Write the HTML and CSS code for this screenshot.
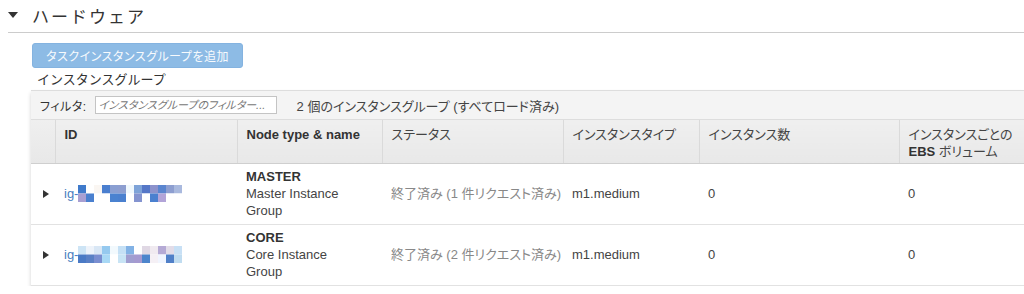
FILE: index.html
```html
<!DOCTYPE html>
<html lang="ja">

<head>
    <meta charset="UTF-8">
    <title>ハードウェア</title>
    <link rel="stylesheet" href="styles.css">
</head>

<body>

    <section class="section">
        <h2 class="section-title"><span class="caret-down"></span>ハードウェア</h2>

        <div class="section-body">
            <button class="btn-add" type="button">タスクインスタンスグループを追加</button>
            <div class="group-label">インスタンスグループ</div>

            <div class="grid-box">
                <div class="filter-bar">
                    <label for="filter">フィルタ:</label>
                    <input id="filter" type="text" placeholder="インスタンスグループのフィルター...">
                    <span class="filter-count">2 個のインスタンスグループ (すべてロード済み)</span>
                </div>

                <table class="grid">
                    <colgroup>
                        <col class="c-exp">
                        <col class="c-id">
                        <col class="c-node">
                        <col class="c-status">
                        <col class="c-type">
                        <col class="c-count">
                        <col>
                    </colgroup>
                    <thead>
                        <tr>
                            <th></th>
                            <th class="strong">ID</th>
                            <th class="strong">Node type &amp; name</th>
                            <th>ステータス</th>
                            <th>インスタンスタイプ</th>
                            <th>インスタンス数</th>
                            <th>インスタンスごとの<br><b>EBS</b> ボリューム</th>
                        </tr>
                    </thead>
                    <tbody>
                        <tr>
                            <td class="exp"><span class="caret-right"></span></td>
                            <td class="mid"><a class="ig" href="#">ig-<svg class="mosaic" width="112" height="17" viewBox="0 0 14 2" preserveAspectRatio="none">
                                <rect x="0" y="0" width="1" height="1" fill="#3f7acb"/>
                                <rect x="1" y="0" width="1" height="1" fill="#ffffff"/>
                                <rect x="2" y="0" width="1" height="1" fill="#faf6f2"/>
                                <rect x="3" y="0" width="1" height="1" fill="#4a7fcf"/>
                                <rect x="4" y="0" width="1" height="1" fill="#8a9fd2"/>
                                <rect x="5" y="0" width="1" height="1" fill="#8d9ed0"/>
                                <rect x="6" y="0" width="1" height="1" fill="#f0f8fd"/>
                                <rect x="7" y="0" width="1" height="1" fill="#7ea3d8"/>
                                <rect x="8" y="0" width="1" height="1" fill="#5577c7"/>
                                <rect x="9" y="0" width="1" height="1" fill="#8c92cc"/>
                                <rect x="10" y="0" width="1" height="1" fill="#5a85cf"/>
                                <rect x="11" y="0" width="1" height="1" fill="#8d9ed0"/>
                                <rect x="12" y="0" width="1" height="1" fill="#a9b9de"/>
                                <rect x="0" y="1" width="1" height="1" fill="#a89fd2"/>
                                <rect x="1" y="1" width="1" height="1" fill="#4a80cf"/>
                                <rect x="2" y="1" width="1" height="1" fill="#ffffff"/>
                                <rect x="3" y="1" width="1" height="1" fill="#ffffff"/>
                                <rect x="4" y="1" width="1" height="1" fill="#4a82d0"/>
                                <rect x="5" y="1" width="1" height="1" fill="#4a80cf"/>
                                <rect x="6" y="1" width="1" height="1" fill="#ffffff"/>
                                <rect x="7" y="1" width="1" height="1" fill="#8494d0"/>
                                <rect x="8" y="1" width="1" height="1" fill="#ffffff"/>
                                <rect x="9" y="1" width="1" height="1" fill="#4a80cf"/>
                                <rect x="10" y="1" width="1" height="1" fill="#b2a4d8"/>
                                <rect x="11" y="1" width="1" height="1" fill="#ffffff"/>
                                <rect x="12" y="1" width="1" height="1" fill="#ffffff"/>
                            </svg></a></td>
                            <td class="node"><b>MASTER</b><br>Master Instance<br>Group</td>
                            <td class="mid status">終了済み (1 件リクエスト済み)</td>
                            <td class="mid">m1.medium</td>
                            <td class="mid">0</td>
                            <td class="mid">0</td>
                        </tr>
                        <tr>
                            <td class="exp"><span class="caret-right"></span></td>
                            <td class="mid"><a class="ig" href="#">ig-<svg class="mosaic" width="112" height="17" viewBox="0 0 14 2" preserveAspectRatio="none">
                                <rect x="0" y="0" width="1" height="1" fill="#cde4f5"/>
                                <rect x="1" y="0" width="1" height="1" fill="#eef3fa"/>
                                <rect x="2" y="0" width="1" height="1" fill="#d9e7f5"/>
                                <rect x="3" y="0" width="1" height="1" fill="#95c9ef"/>
                                <rect x="4" y="0" width="1" height="1" fill="#f2f9fd"/>
                                <rect x="5" y="0" width="1" height="1" fill="#c5e0f5"/>
                                <rect x="6" y="0" width="1" height="1" fill="#82b2e5"/>
                                <rect x="7" y="0" width="1" height="1" fill="#ffffff"/>
                                <rect x="8" y="0" width="1" height="1" fill="#e0d8e4"/>
                                <rect x="9" y="0" width="1" height="1" fill="#f0eaf0"/>
                                <rect x="10" y="0" width="1" height="1" fill="#b5aad5"/>
                                <rect x="11" y="0" width="1" height="1" fill="#e2dce8"/>
                                <rect x="12" y="0" width="1" height="1" fill="#c8e0f5"/>
                                <rect x="0" y="1" width="1" height="1" fill="#4a7ac5"/>
                                <rect x="1" y="1" width="1" height="1" fill="#5a80c5"/>
                                <rect x="2" y="1" width="1" height="1" fill="#7a8ed0"/>
                                <rect x="3" y="1" width="1" height="1" fill="#a8d8f5"/>
                                <rect x="4" y="1" width="1" height="1" fill="#ffffff"/>
                                <rect x="5" y="1" width="1" height="1" fill="#c8e4f5"/>
                                <rect x="6" y="1" width="1" height="1" fill="#a09ed0"/>
                                <rect x="7" y="1" width="1" height="1" fill="#a59ad0"/>
                                <rect x="8" y="1" width="1" height="1" fill="#4d85cc"/>
                                <rect x="9" y="1" width="1" height="1" fill="#f5f0f5"/>
                                <rect x="10" y="1" width="1" height="1" fill="#f0f5ff"/>
                                <rect x="11" y="1" width="1" height="1" fill="#5080c8"/>
                                <rect x="12" y="1" width="1" height="1" fill="#c0dcf0"/>
                            </svg></a></td>
                            <td class="node"><b>CORE</b><br>Core Instance<br>Group</td>
                            <td class="mid status">終了済み (2 件リクエスト済み)</td>
                            <td class="mid">m1.medium</td>
                            <td class="mid">0</td>
                            <td class="mid">0</td>
                        </tr>
                    </tbody>
                </table>
            </div>
        </div>
    </section>

</body>

</html>
```

FILE: styles.css
```css
* {
    box-sizing: border-box;
    margin: 0;
    padding: 0;
}

body {
    font-family: "Liberation Sans", "Noto Sans CJK JP", sans-serif;
    font-size: 13px;
    font-feature-settings: "palt";
    color: #444;
    background: white;
    overflow: hidden;
}

.section {
    padding-left: 8px;
}

.section-title {
    display: flex;
    align-items: center;
    height: 33px;
    padding-bottom: 2px;
    font-size: 17px;
    font-weight: normal;
    font-feature-settings: normal;
    letter-spacing: 2px;
    color: #333;
    border-bottom: 1px solid #ccc;
}

.caret-down {
    display: inline-block;
    width: 0;
    height: 0;
    margin: 0 14px 0 0;
    border-left: 5px solid transparent;
    border-right: 5px solid transparent;
    border-top: 6px solid #333;
}

.section-body {
    padding: 10px 0 0 23px;
}

.btn-add {
    display: block;
    width: 211px;
    height: 25px;
    margin-left: 1px;
    font-family: "Liberation Sans", "Noto Sans CJK JP", sans-serif;
    font-size: 12px;
    font-feature-settings: "palt";
    letter-spacing: 0.5px;
    color: #f7fafd;
    background: #8dbbe5;
    border: 1px solid #84b3e0;
    border-radius: 3px;
}

.group-label {
    height: 22px;
    padding: 1px 0 0 6px;
    font-size: 13px;
    font-feature-settings: normal;
    color: #333;
}

.grid-box {
    box-shadow: 0 3px 4px rgba(0, 0, 0, 0.18);
}

.filter-bar {
    display: flex;
    align-items: center;
    height: 30px;
    padding-left: 9px;
    background: #f4f4f4;
    border-top: 1px solid #ddd;
    border-bottom: 1px solid #ddd;
}

.filter-bar label {
    font-size: 12px;
    letter-spacing: 0.5px;
    color: #333;
}

.filter-bar input {
    width: 182px;
    height: 18px;
    margin-left: 8px;
    padding: 0 3px;
    font-family: "Liberation Sans", "Noto Sans CJK JP", sans-serif;
    font-size: 11px;
    font-style: italic;
    font-feature-settings: "palt";
    border: 1px solid #c4c4c4;
    background: white;
}

.filter-bar input::placeholder {
    color: #777;
}

.filter-count {
    margin-left: 20px;
    font-size: 13px;
    color: #444;
}

.grid {
    width: 100%;
    table-layout: fixed;
    border-collapse: collapse;
}

.c-exp {
    width: 24px;
}

.c-id {
    width: 182px;
}

.c-node {
    width: 145px;
}

.c-status {
    width: 181px;
}

.c-type {
    width: 136px;
}

.c-count {
    width: 200px;
}

.grid th {
    height: 43px;
    padding: 6px 8px 2px 9px;
    line-height: 17px;
    text-align: left;
    vertical-align: top;
    font-weight: normal;
    color: #444;
    background: linear-gradient(#efefef, #e8e8e8);
    border-left: 1px solid #dadada;
    border-bottom: 1px solid #cfcfcf;
    white-space: nowrap;
}

.grid th:first-child {
    border-left: none;
}

.grid th.strong,
.grid th b {
    font-weight: bold;
    color: #333;
}

.grid td {
    height: 60px;
    padding: 4px 8px 5px 9px;
    line-height: 17px;
    vertical-align: top;
    border-bottom: 1px solid #e2e2e2;
    white-space: nowrap;
}

.grid td.mid {
    vertical-align: middle;
}

.grid td.exp {
    vertical-align: middle;
    padding: 0 0 0 12px;
}

.caret-right {
    display: block;
    width: 0;
    height: 0;
    border-top: 4.5px solid transparent;
    border-bottom: 4.5px solid transparent;
    border-left: 6px solid #333;
}

.ig {
    display: inline-flex;
    align-items: center;
    color: #4a7fc1;
    text-decoration: none;
}

.mosaic {
    display: block;
}

.node b {
    color: #333;
}

.status {
    color: #888;
}
```
